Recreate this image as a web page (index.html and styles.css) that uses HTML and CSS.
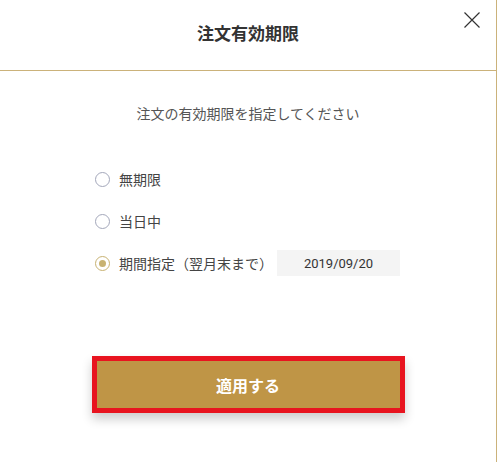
FILE: index.html
```html
<!DOCTYPE html>
<html lang="ja">
<head>
    <meta charset="UTF-8">
    <meta name="viewport" content="width=device-width, initial-scale=1.0">
    <title>注文有効期限</title>
    <link rel="stylesheet" href="styles.css">
</head>
<body>
    <div class="modal">
        <div class="modal-header">
            <h1>注文有効期限</h1>
            <button class="close-btn" type="button" aria-label="閉じる">
                <svg width="16" height="16" viewBox="0 0 16 16">
                    <path d="M0.5 0.5 L15.5 15.5 M15.5 0.5 L0.5 15.5" stroke="#333" stroke-width="1.2" fill="none"/>
                </svg>
            </button>
        </div>

        <div class="modal-body">
            <p class="lead">注文の有効期限を指定してください</p>

            <div class="options">
                <label class="option">
                    <input type="radio" name="expiry">
                    <span class="radio"></span>
                    <span class="option-text">無期限</span>
                </label>
                <label class="option">
                    <input type="radio" name="expiry">
                    <span class="radio"></span>
                    <span class="option-text">当日中</span>
                </label>
                <label class="option">
                    <input type="radio" name="expiry" checked>
                    <span class="radio"></span>
                    <span class="option-text">期間指定（翌月末まで）</span>
                    <span class="date-box">2019/09/20</span>
                </label>
            </div>

            <div class="actions">
                <button class="apply-btn" type="button">適用する</button>
            </div>
        </div>
    </div>
</body>
</html>
```

FILE: styles.css
```css
body {
    margin: 0;
    padding: 0;
    background-color: white;
    font-family: Roboto, "Noto Sans CJK JP", sans-serif;
    color: #333;
}
.modal {
    width: 496px;
    height: 462px;
    background-color: white;
    border-right: 1px solid #cbb27a;
}
.modal-header {
    position: relative;
    height: 70px;
    border-bottom: 1px solid #cbb27a;
    display: flex;
    justify-content: center;
    align-items: center;
}
.modal-header h1 {
    margin: 0 0 6px;
    font-size: 17px;
    font-weight: bold;
    color: #333;
}
.close-btn {
    position: absolute;
    top: 12px;
    right: 16px;
    width: 16px;
    height: 16px;
    padding: 0;
    border: none;
    background: none;
    cursor: pointer;
    display: flex;
}
.lead {
    margin: 33px 0 0;
    text-align: center;
    font-size: 14px;
    line-height: 20px;
    color: #555;
}
.options {
    margin-top: 34px;
    padding-left: 95px;
    display: flex;
    flex-direction: column;
}
.option {
    height: 42px;
    display: flex;
    align-items: center;
    font-size: 14px;
    color: #444;
    cursor: pointer;
}
.option input {
    display: none;
}
.radio {
    width: 15px;
    height: 15px;
    box-sizing: border-box;
    border: 1.6px solid #a3a7ba;
    border-radius: 50%;
    margin-right: 9px;
    display: flex;
    justify-content: center;
    align-items: center;
}
.option input:checked + .radio {
    border-color: #c8b272;
}
.option input:checked + .radio::after {
    content: "";
    width: 7px;
    height: 7px;
    border-radius: 50%;
    background-color: #c8b272;
}
.date-box {
    margin-left: 4px;
    width: 123px;
    height: 26px;
    background-color: #f4f4f4;
    display: flex;
    justify-content: center;
    align-items: center;
    font-size: 13px;
    color: #333;
}
.actions {
    margin-top: 72px;
    display: flex;
    justify-content: center;
}
.apply-btn {
    width: 313px;
    height: 57px;
    background-color: #bf9546;
    border: 5px solid #e8141f;
    color: white;
    font-family: inherit;
    font-size: 16px;
    font-weight: bold;
    cursor: pointer;
    box-shadow: 0 6px 10px rgba(0, 0, 0, 0.2);
}
```
